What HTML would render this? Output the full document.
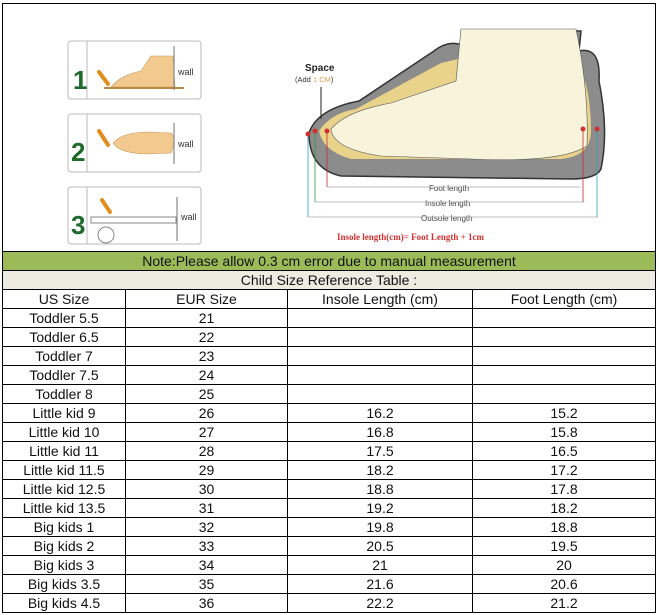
<!DOCTYPE html>
<html><head><style>
body{margin:0;width:659px;height:615px;background:#fff;position:relative;overflow:hidden;font-family:"Liberation Sans","DejaVu Sans",sans-serif;}
#img{position:absolute;left:2px;top:3px;width:652px;height:248px;border:1px solid #000;border-bottom:none;background:#fff}
table{position:absolute;left:2px;top:251px;border-collapse:collapse;width:653px;table-layout:fixed;font-size:14px;color:#111}
td{border:1px solid #000;height:18px;padding:0;text-align:center;line-height:18px;white-space:nowrap;overflow:hidden}
</style></head><body>
<div id="img">
<svg width="652" height="248" viewBox="2 3 652 248" xmlns="http://www.w3.org/2000/svg" font-family="Liberation Sans, sans-serif">
<g fill="#fff" stroke="#bbb" stroke-width="1">
<rect x="67" y="40" width="133" height="58" rx="3"/><rect x="67" y="113" width="133" height="58" rx="3"/><rect x="67" y="186" width="133" height="57" rx="3"/>
</g>
<g stroke="#bbb"><line x1="86" y1="40" x2="86" y2="98"/><line x1="86" y1="113" x2="86" y2="171"/><line x1="86" y1="186" x2="86" y2="243"/></g>
<g fill="#1f6b2c" font-weight="bold" font-size="26"><text x="72" y="88">1</text><text x="70" y="160">2</text><text x="70" y="233">3</text></g>
<g fill="#f2c98e" stroke="#c79a5a" stroke-width="0.6">
<path d="M110 86 Q120 74 140 70 L150 55 L172 55 L174 86 Z"/>
<path d="M112 142 Q120 132 145 131 L170 132 Q176 138 170 152 L145 153 Q118 152 112 142Z"/>
</g>
<rect x="103" y="86" width="80" height="2" fill="#b8893e"/>
<g stroke="#888" stroke-width="1.2"><line x1="173" y1="45" x2="173" y2="89"/><line x1="173" y1="122" x2="173" y2="163"/><line x1="176" y1="196" x2="176" y2="240"/></g>
<g font-size="9" fill="#333"><text x="177" y="74">wall</text><text x="177" y="146">wall</text><text x="180" y="219">wall</text></g>
<rect x="90" y="216" width="85" height="6" fill="#fff" stroke="#888"/>
<circle cx="105" cy="234" r="8" fill="#fff" stroke="#888"/>
<g stroke="#e08f1e" stroke-width="4" stroke-linecap="round"><line x1="98" y1="71" x2="107" y2="83"/><line x1="98" y1="130" x2="107" y2="144"/><line x1="101" y1="199" x2="109" y2="211"/></g>
<path d="M308 132 Q316 108 358 100 L433 50 Q448 38 463 45 L468 30 L580 30 L578 50 Q600 45 598 80 Q608 130 600 168 Q595 178 570 178 L340 175 Q308 168 308 132Z" fill="#8c8c8c" stroke="#333" stroke-width="1.5"/>
<path d="M318 130 Q330 112 355 108 L440 62 L470 55 L572 52 Q590 80 590 130 Q590 155 560 158 L350 158 Q322 150 318 130Z" fill="#e9d28a"/>
<path d="M330 128 Q345 110 390 102 L455 80 L460 28 L575 28 Q588 90 586 145 Q560 162 470 158 L380 155 Q332 148 330 128Z" fill="#f8f4dc" stroke="#555" stroke-width="0.6"/>
<text x="304" y="70" font-size="10" font-weight="bold" fill="#222">Space</text>
<text x="294" y="81" font-size="7.5" fill="#333">(Add <tspan fill="#e8a04a">1 CM</tspan>)</text>
<line x1="320" y1="86" x2="320" y2="118" stroke="#222"/>
<g font-size="8" fill="#444"><text x="428" y="190">Foot length</text><text x="424" y="205">Insole length</text><text x="420" y="220">Outsole length</text></g>
<g stroke="#aaa" stroke-width="0.7"><line x1="326" y1="186" x2="580" y2="186"/><line x1="314" y1="201" x2="583" y2="201"/><line x1="307" y1="216" x2="597" y2="216"/></g>
<g stroke-width="0.8"><line x1="326" y1="130" x2="326" y2="186" stroke="#c03030"/><line x1="314" y1="130" x2="314" y2="201" stroke="#2a9a3a"/><line x1="307" y1="133" x2="307" y2="216" stroke="#30a0c0"/><line x1="582" y1="128" x2="582" y2="201" stroke="#c03030"/><line x1="596" y1="128" x2="596" y2="216" stroke="#30a0c0"/></g>
<g fill="#d03030"><circle cx="307" cy="133" r="2.5"/><circle cx="314" cy="130" r="2.5"/><circle cx="326" cy="130" r="2.5"/><circle cx="582" cy="128" r="2.5"/><circle cx="596" cy="128" r="2.5"/></g>
<text x="336" y="239" font-size="9" font-weight="bold" fill="#d03030" font-family="Liberation Serif, serif">Insole length(cm)= Foot Length + 1cm</text>
</svg>
</div>
<table>
<colgroup><col style="width:123px"><col style="width:162px"><col style="width:185px"><col style="width:183px"></colgroup>
<tr><td colspan="4" style="background:#9bbb59">Note:Please allow 0.3 cm error due to manual measurement</td></tr>
<tr><td colspan="4" style="background:#eeece1">Child Size Reference Table :</td></tr>
<tr><td>US Size</td><td>EUR Size</td><td>Insole Length (cm)</td><td>Foot Length (cm)</td></tr>
<tr><td>Toddler 5.5</td><td>21</td><td></td><td></td></tr>
<tr><td>Toddler 6.5</td><td>22</td><td></td><td></td></tr>
<tr><td>Toddler 7</td><td>23</td><td></td><td></td></tr>
<tr><td>Toddler 7.5</td><td>24</td><td></td><td></td></tr>
<tr><td>Toddler 8</td><td>25</td><td></td><td></td></tr>
<tr><td>Little kid 9</td><td>26</td><td>16.2</td><td>15.2</td></tr>
<tr><td>Little kid 10</td><td>27</td><td>16.8</td><td>15.8</td></tr>
<tr><td>Little kid 11</td><td>28</td><td>17.5</td><td>16.5</td></tr>
<tr><td>Little kid 11.5</td><td>29</td><td>18.2</td><td>17.2</td></tr>
<tr><td>Little kid 12.5</td><td>30</td><td>18.8</td><td>17.8</td></tr>
<tr><td>Little kid 13.5</td><td>31</td><td>19.2</td><td>18.2</td></tr>
<tr><td>Big kids 1</td><td>32</td><td>19.8</td><td>18.8</td></tr>
<tr><td>Big kids 2</td><td>33</td><td>20.5</td><td>19.5</td></tr>
<tr><td>Big kids 3</td><td>34</td><td>21</td><td>20</td></tr>
<tr><td>Big kids 3.5</td><td>35</td><td>21.6</td><td>20.6</td></tr>
<tr><td>Big kids 4.5</td><td>36</td><td>22.2</td><td>21.2</td></tr>
</table>
</body></html>
